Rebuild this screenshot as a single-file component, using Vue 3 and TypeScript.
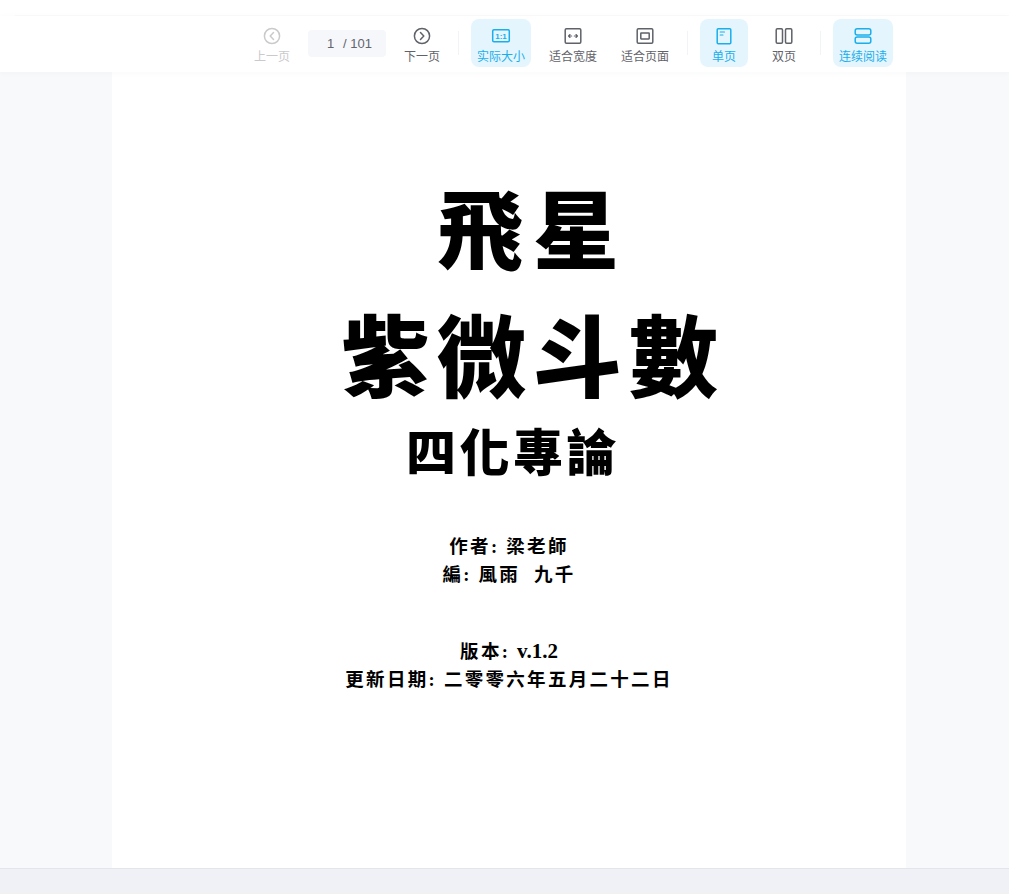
<script setup lang="ts">
interface Tool { key: string; label: string; active?: boolean; disabled?: boolean }
const prev: Tool = { key: 'prev', label: '上一页', disabled: true }
const next: Tool = { key: 'next', label: '下一页' }
const zoomTools: Tool[] = [
  { key: 'actual', label: '实际大小', active: true },
  { key: 'width', label: '适合宽度' },
  { key: 'page', label: '适合页面' },
]
const spreadTools: Tool[] = [
  { key: 'single', label: '单页', active: true },
  { key: 'double', label: '双页' },
]
const scrollTool: Tool = { key: 'scroll', label: '连续阅读', active: true }
</script>

<template>
  <div class="app">
    <div class="top-strip"><div class="top-line"></div></div>
    <header class="toolbar">
      <button class="tool disabled">
        <svg class="ico" viewBox="0 0 20 20"><circle cx="10" cy="10" r="7.6" /><path d="M11.5 6.6 8.2 10l3.3 3.4" /></svg>
        <span>{{ prev.label }}</span>
      </button>
      <div class="pager"><span class="cur">1</span><span class="total">/ 101</span></div>
      <button class="tool">
        <svg class="ico" viewBox="0 0 20 20"><circle cx="10" cy="10" r="7.6" /><path d="M8.5 6.6 11.8 10l-3.3 3.4" /></svg>
        <span>{{ next.label }}</span>
      </button>
      <i class="sep"></i>
      <button v-for="t in zoomTools" :key="t.key" class="tool" :class="{ active: t.active }">
        <svg v-if="t.key === 'actual'" class="ico" viewBox="0 0 20 20">
          <rect x="1.7" y="3.7" width="16.6" height="12" rx="1.2" />
          <text x="10" y="12.6" text-anchor="middle" class="ratio">1:1</text>
        </svg>
        <svg v-else-if="t.key === 'width'" class="ico" viewBox="0 0 20 20">
          <rect x="2.2" y="2.7" width="15.6" height="14.6" rx="1.2" />
          <path class="thin" d="M5.5 10h3.200M11.300 10h3.200M7 8.500 5.500 10 7 11.500M13 8.500l1.500 1.500-1.500 1.500" />
        </svg>
        <svg v-else class="ico" viewBox="0 0 20 20">
          <rect x="2.200" y="2.700" width="15.600" height="14.600" rx="1.200" />
          <rect x="5.800" y="7" width="8.400" height="6" rx=".4" />
        </svg>
        <span>{{ t.label }}</span>
      </button>
      <i class="sep"></i>
      <button v-for="t in spreadTools" :key="t.key" class="tool" :class="{ active: t.active }">
        <svg v-if="t.key === 'single'" class="ico" viewBox="0 0 20 20">
          <rect x="3.200" y="2.700" width="13.600" height="15" rx="1" />
          <path class="thin" d="M6.200 6h4.300M6.200 9h2.800" />
        </svg>
        <svg v-else class="ico" viewBox="0 0 20 20">
          <rect x="2.200" y="2.700" width="6.300" height="14.600" rx="1.200" />
          <rect x="11.500" y="2.700" width="6.300" height="14.600" rx="1.200" />
        </svg>
        <span>{{ t.label }}</span>
      </button>
      <i class="sep"></i>
      <button class="tool active">
        <svg class="ico" viewBox="0 0 20 20">
          <rect x="2.200" y="2.700" width="15.600" height="6.400" rx="2" />
          <rect x="2.200" y="10.900" width="15.600" height="6.400" rx="2" />
        </svg>
        <span>{{ scrollTool.label }}</span>
      </button>
    </header>

    <main class="viewer">
      <article class="sheet">
        <h1 class="t1">飛星</h1>
        <h1 class="t2">紫微斗數</h1>
        <h2 class="t3">四化專論</h2>
        <p class="meta m1">作者: 梁老師</p>
        <p class="meta">編: 風雨&nbsp;&nbsp;九千</p>
        <p class="meta m2">版本: <b class="ver">v.1.2</b></p>
        <p class="meta">更新日期: 二零零六年五月二十二日</p>
      </article>
    </main>

    <footer class="status"></footer>
    <div class="edge"></div>
  </div>
</template>

<style scoped>
.app {
  height: 894px;
  display: flex;
  flex-direction: column;
  overflow: hidden;
  background: #fff;
  font-family: "Noto Sans CJK SC", "Noto Sans", sans-serif;
}
.top-strip { height: 16px; flex: none; display: flex; align-items: flex-end; }
.top-line { flex: 1; margin-left: 15px; height: 1px; background: #fafafa; }
.toolbar {
  position: relative;
  z-index: 2;
  flex: none;
  height: 56px;
  display: flex;
  align-items: center;
  gap: 12px;
  padding-left: 248px;
  padding-bottom: 2px;
  box-sizing: border-box;
  background: #fff;
  box-shadow: 0 1px 6px rgba(40, 50, 70, .03);
}
.tool {
  min-width: 48px;
  height: 48px;
  flex: none;
  padding: 7px 6px 0;
  box-sizing: border-box;
  border: 0;
  border-radius: 8px;
  background: transparent;
  display: flex;
  flex-direction: column;
  align-items: center;
  color: #5f6269;
  font: inherit;
  font-size: 12px;
  line-height: 16px;
  white-space: nowrap;
}
.tool.active { background: #e5f5fe; color: #1aaeea; }
.tool.disabled { color: #c9cacc; }
.ico {
  width: 20px;
  height: 20px;
  flex: none;
  margin-bottom: 2px;
  fill: none;
  stroke: currentColor;
  stroke-width: 1.5;
  stroke-linecap: round;
  stroke-linejoin: round;
}
.ico .thin { stroke-width: 1.1; }
.ratio {
  fill: currentColor;
  stroke: none;
  font-size: 8px;
  font-weight: 700;
  font-family: "Liberation Sans", sans-serif;
}
.pager {
  width: 78px;
  height: 27px;
  flex: none;
  box-sizing: border-box;
  padding-left: 19px;
  display: flex;
  align-items: center;
  border-radius: 4px;
  background: #f6f7fb;
  color: #62656c;
  font-family: "Liberation Sans", sans-serif;
  font-size: 13px;
}
.cur { width: 16px; }
.total { white-space: nowrap; }
.sep { width: 1px; height: 24px; flex: none; background: #f2f3f5; }
.viewer {
  flex: 1;
  min-height: 0;
  display: flex;
  justify-content: center;
  padding-left: 9px;
  background: #f8f9fb;
}
.sheet {
  width: 794px;
  box-sizing: border-box;
  background: #fff;
  padding-top: 104px;
  color: #000;
  text-align: center;
  font-family: "Liberation Serif", "Noto Sans CJK TC", serif;
}
.t1, .t2, .t3, .meta { margin: 0; white-space: nowrap; }
.t1, .t2, .t3 { font-family: "Noto Sans CJK TC", sans-serif; font-weight: 900; }
.t1 {
  font-size: 86px;
  line-height: 100px;
  letter-spacing: 10px;
  margin-left: 48px;
}
.t2 {
  font-size: 89px;
  line-height: 100px;
  letter-spacing: 7px;
  margin-top: 26px;
  margin-left: 48px;
}
.t3 {
  font-size: 50px;
  line-height: 61px;
  letter-spacing: 3.5px;
  margin-top: 17px;
  margin-left: 8px;
}
.meta {
  font-size: 18.5px;
  line-height: 28px;
  font-weight: 700;
  letter-spacing: 2.3px;
}
.m1 { margin-top: 53px; }
.m2 { margin-top: 48px; }
.ver { font-size: 21px; letter-spacing: 0; }
.status {
  flex: none;
  height: 23px;
  box-sizing: border-box;
  border-top: 1px solid #e4e5ea;
  background: #f0f1f7;
}
.edge { height: 3px; flex: none; background: #f1f1f1; }
</style>
